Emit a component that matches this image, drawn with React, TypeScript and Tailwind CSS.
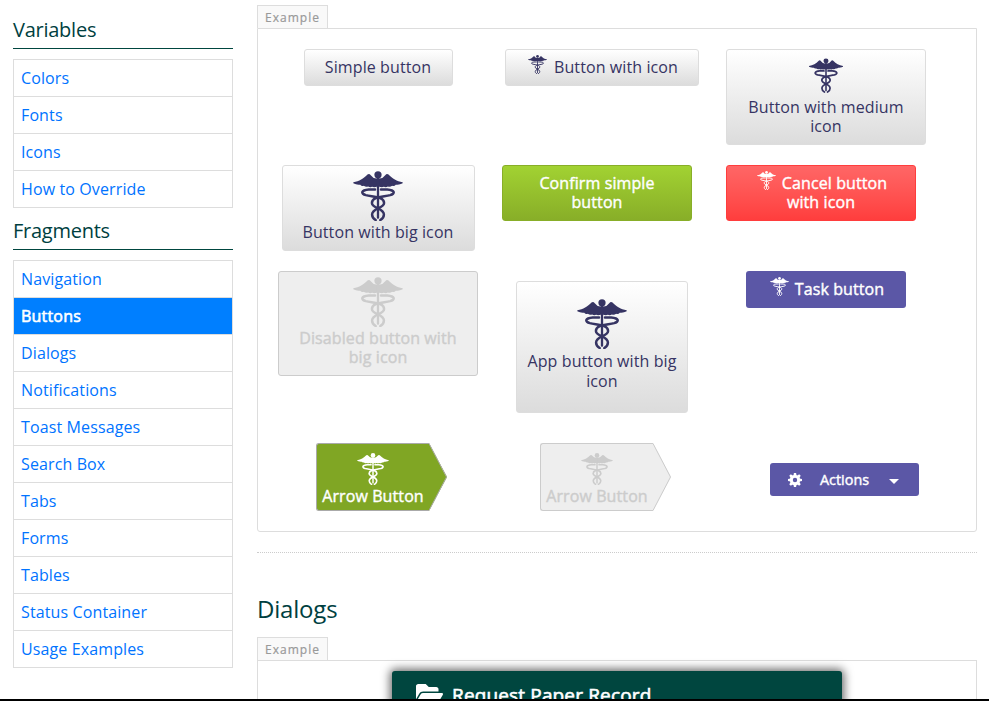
import type { ReactNode } from 'react';
import { FaFolderOpen } from 'react-icons/fa';

const SNAKE =
  'M66 56 H47 C23 58 22 69 38 73.500 C60 79 93.500 78 93.500 97 C93.500 113 57 113 57 132 C57 140 61 145 68 149';

function Caduceus({ className }: { className: string }) {
  return (
    <svg viewBox="0 0 150 152" className={className} fill="currentColor" aria-hidden="true">
      <circle cx="75" cy="11.500" r="11" />
      <path d="M0 34 C18 32 31 23 43 11 Q48 6 53 13 Q61 24 72 23 H78 Q89 24 97 13 Q102 6 107 11 C119 23 132 32 150 34 V37 C143 41 134 41 129 42 Q125 47 118 45 Q112 50 105 47 Q99 51 93 48 Q87 51 79 48 H71 Q63 51 57 48 Q51 51 45 47 Q38 50 32 45 Q25 47 21 42 C16 41 7 41 0 37 Z" />
      <rect x="71.500" y="20" width="7" height="125" rx="3" />
      <g fill="none" stroke="currentColor" strokeWidth="7.500" strokeLinecap="round">
        <path d={SNAKE} />
        <path d={SNAKE} transform="matrix(-1 0 0 1 150 0)" />
      </g>
    </svg>
  );
}

function Gear() {
  return (
    <svg viewBox="0 0 14 14" className="h-[14px] w-[14px]" aria-hidden="true">
      <circle cx="7" cy="7" r="3.700" fill="none" stroke="currentColor" strokeWidth="3" />
      {[0, 45, 90, 135].map((angle) => (
        <g key={angle} transform={`rotate(${angle} 7 7)`} fill="currentColor">
          <path d="M5.500 2.500 L5.900 0 H8.100 L8.500 2.500 Z" />
          <path d="M5.500 11.500 L5.900 14 H8.100 L8.500 11.500 Z" />
        </g>
      ))}
    </svg>
  );
}

function SideSection({ title, items, active }: { title: string; items: string[]; active?: string }) {
  return (
    <section className="mb-px">
      <h3 className="mb-[10px] flex h-[41px] items-center border-b border-[#00463f] pt-[3px] text-[20px] leading-6 tracking-[-0.25px] text-[#003f3f]">
        {title}
      </h3>
      <ul className="border border-[#ddd]">
        {items.map((item) => (
          <li key={item} className="h-[37px] border-b border-[#ddd] last:h-9 last:border-b-0">
            <a
              className={
                item === active
                  ? 'flex h-9 items-center bg-[#007fff] px-[7px] tracking-[0.2px] text-white [-webkit-text-stroke:0.6px]'
                  : 'flex h-9 items-center px-[7px] tracking-[0.12px] text-[#0073ff]'
              }
            >
              {item}
            </a>
          </li>
        ))}
      </ul>
    </section>
  );
}

function ExampleTab() {
  return (
    <div className="flex h-[23px] w-[71px] items-center justify-center border border-b-0 border-[#ddd] bg-[#f9f9f9] pt-[2px] text-[12px] tracking-[1px] text-[#999] [-webkit-text-stroke:0.2px]">
      Example
    </div>
  );
}

const plain =
  'rounded-[3px] border border-[#ddd] bg-linear-to-b from-white to-[#dcdcdc] text-center tracking-[0.1px] text-[#363463] ';

const strong = 'tracking-[0.1px] [-webkit-text-stroke:0.4px] ';

function Row({ className, children }: { className: string; children: ReactNode }) {
  return <div className={'grid grid-cols-[224px_224px_224px] items-start justify-items-center ' + className}>{children}</div>;
}

function ArrowButton({ disabled }: { disabled?: boolean }) {
  const fill = disabled ? '#eee' : '#80a624';
  const line = disabled ? '#ccc' : '#aaa';
  return (
    <button className={'ml-[7px] flex h-[68px] w-[131px] leading-[19px] ' + (disabled ? 'text-[#ccc]' : 'text-white')}>
      <span
        className={
          'flex h-[68px] w-[113px] flex-col items-center rounded-l-[3px] border border-r-0 pt-[9px] ' +
          strong +
          (disabled ? 'border-[#ccc] bg-[#eee]' : 'border-[#aaa] bg-[#80a624]')
        }
      >
        <Caduceus className="h-8 w-8" />
        <span className="mt-[2px] whitespace-nowrap">Arrow Button</span>
      </span>
      <svg className="h-[68px] w-[18px]" viewBox="0 0 18 68">
        <path d="M0 0 L18 34 L0 68 Z" fill={fill} />
        <path d="M0 .5 L17.500 34 L0 67.500" fill="none" stroke={line} />
      </svg>
    </button>
  );
}

export default function App() {
  return (
    <div className="flex h-[701px] w-[989px] flex-col overflow-hidden bg-white font-['Open_Sans',sans-serif] text-[16px]">
      <div className="flex h-[699px] items-start gap-6 overflow-hidden pl-[13px]">
        <aside className="w-[220px] shrink-0 pt-2">
          <SideSection title="Variables" items={['Colors', 'Fonts', 'Icons', 'How to Override']} />
          <SideSection
            title="Fragments"
            active="Buttons"
            items={[
              'Navigation',
              'Buttons',
              'Dialogs',
              'Notifications',
              'Toast Messages',
              'Search Box',
              'Tabs',
              'Forms',
              'Tables',
              'Status Container',
              'Usage Examples',
            ]}
          />
        </aside>
        <main className="w-[720px] shrink-0 pt-[5px]">
          <ExampleTab />
          <div className="h-[504px] rounded-b-[3px] border border-[#ddd] pt-5 pl-2">
            <Row className="h-[116px]">
              <button className={plain + 'h-[37px] w-[149px] pb-[2px]'}>Simple button</button>
              <button className={plain + 'flex h-[37px] w-[194px] items-center justify-center gap-[7px] pb-px pl-[2px]'}>
                <Caduceus className="mb-[5px] h-[19px] w-[19px]" />
                Button with icon
              </button>
              <button className={plain + 'flex h-24 w-[200px] flex-col items-center px-5 pt-2 leading-[19.2px]'}>
                <Caduceus className="mb-[5px] h-[35px] w-[34px] shrink-0" />
                Button with medium icon
              </button>
            </Row>
            <Row className="h-[106px]">
              <button className={plain + 'flex h-[86px] w-[193px] flex-col items-center pt-[5px] leading-[19.2px]'}>
                <Caduceus className="mb-[2px] h-[50px] w-[50px] shrink-0" />
                Button with big icon
              </button>
              <button
                className={
                  strong +
                  'mr-[10px] h-14 w-[190px] rounded-[3px] border border-[#88ae28] bg-linear-to-b from-[#a2d232] to-[#88ae28] px-5 leading-[19.2px] text-white'
                }
              >
                Confirm simple button
              </button>
              <button
                className={
                  strong +
                  'mr-[10px] flex h-14 w-[190px] flex-col items-center rounded-[3px] border border-[#ff3d3d] bg-linear-to-b from-[#ff6666] to-[#ff3d3d] pt-[8px] leading-[19px] text-white'
                }
              >
                <span className="flex h-[19px] items-center gap-[6px] pl-[2px]">
                  <Caduceus className="mb-[7px] h-[19px] w-[19px]" />
                  Cancel button
                </span>
                <span>with icon</span>
              </button>
            </Row>
            <Row className="h-[172px]">
              <button
                className={
                  strong +
                  'flex h-[105px] w-[200px] flex-col items-center rounded-[3px] border border-[#ccc] bg-[#eee] px-4 pt-[5px] leading-[19.2px] text-[#ccc]'
                }
              >
                <Caduceus className="mb-[2px] h-[50px] w-[50px] shrink-0" />
                Disabled button with big icon
              </button>
              <button className={plain + 'mt-[10px] flex h-[132px] w-[172px] flex-col items-center px-[10px] pt-[17px] leading-5'}>
                <Caduceus className="mb-[2px] h-[50px] w-[50px] shrink-0" />
                App button with big icon
              </button>
              <button
                className={
                  strong +
                  'flex h-[37px] w-40 items-center justify-center gap-[6px] rounded-[3px] bg-[#5b57a6] pl-[2px] leading-5 text-white'
                }
              >
                <Caduceus className="mb-[6px] h-[19px] w-[19px]" />
                <span className="mb-px">Task button</span>
              </button>
            </Row>
            <Row className="h-[88px]">
              <ArrowButton />
              <ArrowButton disabled />
              <button className="mt-5 ml-[37px] flex h-[33px] w-[149px] items-center rounded-[3px] bg-[#5b57a6] pl-[18px] text-[14.4px] text-white">
                <Gear />
                <span className="ml-[18px] [-webkit-text-stroke:0.4px]">Actions</span>
                <svg className="mt-[3px] ml-[19.5px] h-[5px] w-[10px]" viewBox="0 0 10 5">
                  <path d="M0 0H10L5 5Z" fill="white" />
                </svg>
              </button>
            </Row>
          </div>
          <div className="mt-5 border-t border-dotted border-[#ccc]" />
          <h2 className="mt-10 mb-[12px] text-[24px] leading-8 tracking-[-0.2px] text-[#003f3f]">Dialogs</h2>
          <ExampleTab />
          <div className="flex h-[200px] items-start border border-[#ddd] pt-[10px] pl-[134px]">
            <div className="flex h-[150px] w-[450px] items-start rounded-t-[3px] bg-[#00463f] pt-[10px] pl-6 text-white shadow-[0_0_10px_2px_rgba(0,0,0,0.6)]">
              <FaFolderOpen className="h-[24px] w-[27px]" />
              <span className="mt-px ml-[9px] text-[19px] leading-[26px] tracking-[0.15px] [-webkit-text-stroke:0.6px]">
                Request Paper Record
              </span>
            </div>
          </div>
        </main>
      </div>
      <div className="h-[2px] shrink-0 bg-black" />
    </div>
  );
}
